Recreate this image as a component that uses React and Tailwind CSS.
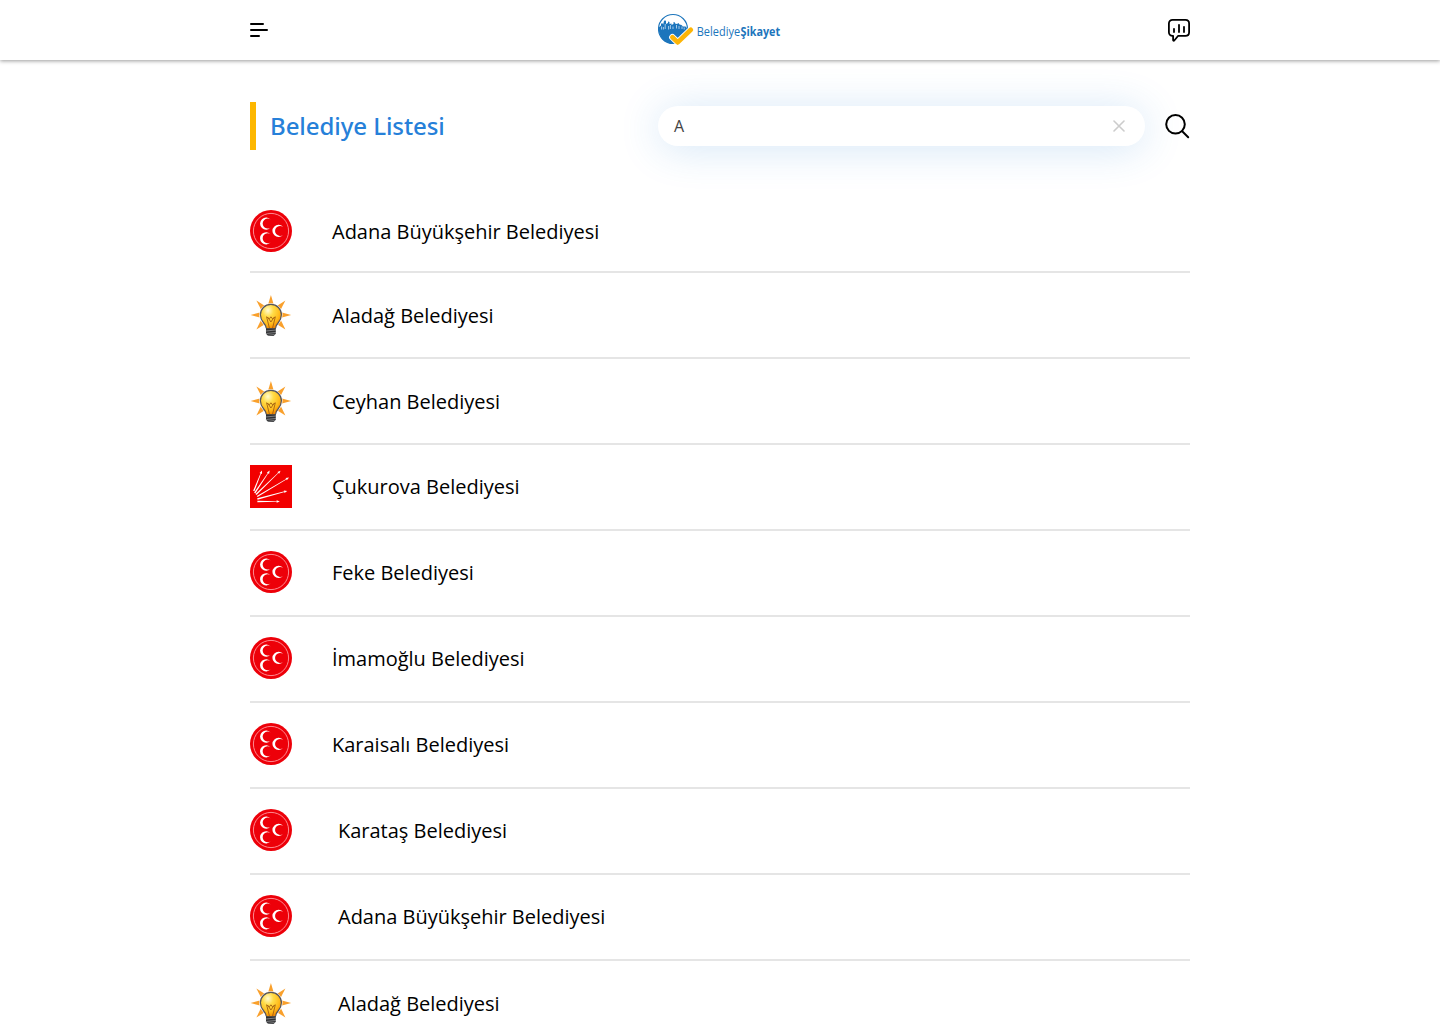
import React from "react";

const rows = [
  { name: "Adana Büyükşehir Belediyesi", party: "crescents", pad: "pt-[23px]", text: "ml-10 mt-px" },
  { name: "Aladağ Belediyesi", party: "bulb", pad: "pt-[22px]", text: "ml-10" },
  { name: "Ceyhan Belediyesi", party: "bulb", pad: "pt-[22px]", text: "ml-10" },
  { name: "Çukurova Belediyesi", party: "arrows", pad: "pt-5", text: "ml-10 mt-px" },
  { name: "Feke Belediyesi", party: "crescents", pad: "pt-5", text: "ml-10 mt-px" },
  { name: "İmamoğlu Belediyesi", party: "crescents", pad: "pt-5", text: "ml-10 mt-px" },
  { name: "Karaisalı Belediyesi", party: "crescents", pad: "pt-5", text: "ml-10 mt-px" },
  { name: "Karataş Belediyesi", party: "crescents", pad: "pt-5", text: "ml-[46px] mt-px" },
  { name: "Adana Büyükşehir Belediyesi", party: "crescents", pad: "pt-5", text: "ml-[46px] mt-px" },
  { name: "Aladağ Belediyesi", party: "bulb", pad: "pt-[22px]", text: "ml-[46px]" },
];

function Crescents() {
  const moon = "M5-3.8A6.1 6.1 0 1 0 5 3.8A5 5 0 1 1 5-3.8Z";
  return (
    <svg className="h-[42px] w-[42px] shrink-0" viewBox="0 0 42 42">
      <circle cx="21" cy="21" r="21" fill="#ed0009" />
      <circle cx="21" cy="21" r="17.6" fill="none" stroke="#ff9aa0" strokeWidth="0.9" />
      <g fill="#fff">
        <path d={moon} transform="translate(15.9 13.6)" />
        <path d={moon} transform="translate(15.9 28.3)" />
        <path d={moon} transform="translate(28.3 20.9)" />
      </g>
    </svg>
  );
}

const glassPath =
  "M20.9 9.4c-6.1 0-10.5 4.7-10.5 10.4 0 3.4 1.5 6.1 3.3 8.2 1.4 1.6 2.1 2.9 2.3 4.4.2 1 .7 1.4 1.6 1.4h6.6c.9 0 1.4-.4 1.6-1.4.2-1.5.9-2.8 2.3-4.4 1.8-2.1 3.3-4.8 3.3-8.2 0-5.7-4.4-10.4-10.5-10.4z";

function Bulb() {
  return (
    <svg className="h-[42px] w-[42px] shrink-0" viewBox="0 0 42 42">
      <defs>
        <radialGradient id="glass" cx="0.36" cy="0.25" r="0.75">
          <stop offset="0" stopColor="#fffbd0" />
          <stop offset="0.35" stopColor="#ffdc48" />
          <stop offset="0.75" stopColor="#ffba1a" />
          <stop offset="1" stopColor="#f58a00" />
        </radialGradient>
      </defs>
      <g fill="#f9a02c">
        <path d="M20.9 0l2.8 9.4h-5.6z" />
        <path d="M6.4 5.4l9 5.8-4 4z" />
        <path d="M35.4 5.4l-9 5.8 4 4z" />
        <path d="M.6 20l9.2-2.4v5z" />
        <path d="M41.2 20l-9.2-2.4v5z" />
        <path d="M6.4 34.4l4.6-9.4 3.8 4.2z" />
        <path d="M35.4 34.4l-4.6-9.4-3.8 4.2z" />
      </g>
      <path d={glassPath} fill="#fff" stroke="#fff" strokeWidth="2.2" />
      <path d={glassPath} fill="url(#glass)" stroke="#55555c" strokeWidth="1.2" />
      <path d="M19.4 33l-2.8-11.2 2.8 2 1.5-2 1.6 2 2.8-2L22.6 33M18 22.6l2.9 4.4 3-4.4" fill="none" stroke="#a35f10" strokeWidth="0.9" />
      <path d="M16 33.4h9.8v5.4l-2.2 2.2h-5.2L16 38.8z" fill="#2f3032" />
      <path d="M15.8 36l10.2-1M15.8 38.5l10.2-1M17.6 40.4l7-.8" stroke="#a4a5a7" strokeWidth="0.7" />
    </svg>
  );
}

const rays = [
  [3.8, 26, 11.7, 6.3],
  [4.7, 28, 19.3, 6.2],
  [6, 29.6, 30, 6.2],
  [7.2, 31.5, 38.3, 13],
  [7.4, 34, 36.5, 26.1],
  [7.4, 36.5, 29, 36.5],
];

function Arrows() {
  return (
    <svg className="h-[43px] w-[42px] shrink-0" viewBox="0 0 42 43">
      <path fill="#f20000" d="M0 0h42v43H0z" />
      {rays.map(([x1, y1, x2, y2]) => {
        const angle = (Math.atan2(y2 - y1, x2 - x1) * 180) / Math.PI;
        const length = Math.hypot(x2 - x1, y2 - y1);
        return (
          <g key={x2} transform={`translate(${x1} ${y1}) rotate(${angle})`} fill="#fff">
            <path d={`M0-.7L${length - 2}-.3v.6L0 .7z`} />
            <path d={`M${length - 2.4}-1.3L${length + 0.8} 0L${length - 2.4} 1.3z`} />
          </g>
        );
      })}
    </svg>
  );
}

const icons = { crescents: Crescents, bulb: Bulb, arrows: Arrows };

function Logo() {
  return (
    <div className="ml-[390px] mt-3 flex h-9 w-[130px] items-start text-[#1c75bc]">
      <svg className="h-9 w-[38px] shrink-0" viewBox="0 0 38 36">
        <circle cx="15" cy="17" r="14.5" fill="#fff" stroke="#1c75bc" strokeWidth="1.1" />
        <path d="M.6 15.5L3 13.5v-2h2v1.5l1-4 1-.8 1 .8v3l2-1V9.5l1.5.5v2l2-.5v1.5l2-1v-2l1.5.5v1l2 .5 1.5-1 1 1.5 2 .5 1.5 1.5h2.5l1.4 1.5C29.6 26 24 31.5 15 31.5S.4 25 .6 15.5z" fill="#1c75bc" />
        <path d="M3.6 14.5v3M5.4 15v2.5M7.2 12v5M10.6 14v3.5M12.4 13v4M15 14.5v2.5M18.5 13v3.5M21 14v3M24 14.5v2.5M26.2 15.5v2" stroke="#b5d5ee" strokeWidth="0.9" />
        <path d="M14.4 25.2l5.3 5.2L32 18.5" fill="none" stroke="#fff" strokeWidth="6.5" strokeLinecap="round" strokeLinejoin="round" />
        <path d="M14.4 25.2l5.3 5.2L32.8 17.8" fill="none" stroke="#fdb507" strokeWidth="4.7" strokeLinecap="round" strokeLinejoin="round" />
      </svg>
      <svg className="h-9 w-[92px] shrink-0 overflow-visible" viewBox="38 0 92 36" fill="currentColor" fontFamily="'Open Sans', sans-serif">
        <text x="38.7" y="24" fontSize="12.2" textLength="43.4" lengthAdjust="spacingAndGlyphs">Belediye</text>
        <text x="82.5" y="24" fontSize="12" fontWeight="700" textLength="39.7" lengthAdjust="spacingAndGlyphs">Şikayet</text>
      </svg>
    </div>
  );
}

export default function App() {
  return (
    <div className="h-[1024px] overflow-hidden bg-white font-['Open_Sans',sans-serif] text-black">
      <header className="h-[60px] bg-white shadow-[0_1px_4px_rgba(0,0,0,0.4)]">
        <div className="mx-auto flex h-full w-[940px] items-start">
          <button aria-label="Menü" className="mt-[23px]">
            <svg className="h-[14px] w-[18px]" viewBox="0 0 18 14" stroke="#000" strokeWidth="2" strokeLinecap="round">
              <path d="M1 1h12M1 7h16M1 13h8" />
            </svg>
          </button>
          <Logo />
          <button aria-label="Şikayetler" className="ml-auto mt-[18px]">
            <svg className="h-6 w-[22px]" viewBox="0 0 22 24" fill="none" stroke="#000" strokeWidth="1.8" strokeLinecap="round" strokeLinejoin="round">
              <path d="M4.6 1.9h12.8c2.2 0 3.7 1.4 3.7 3.6v8.7c0 2.2-1.5 3.6-3.7 3.6h-7.2l-3.9 4.7c-.5.6-1.2.3-1.2-.5v-4.2h-.5C2.4 17.8.9 16.4.9 14.2V5.5c0-2.2 1.5-3.6 3.7-3.6z" />
              <path d="M6 10.8v3.2M11 6.8V14M16 8.8V14" />
            </svg>
          </button>
        </div>
      </header>

      <main className="mx-auto w-[940px]">
        <div className="flex h-[127px] items-start pt-[42px]">
          <h1 className="flex h-12 w-[408px] items-center border-l-[6px] border-[#fdb700] pl-[14px] font-['Noto_Sans',sans-serif] text-2xl font-medium tracking-[-0.07px] text-[#2680d9]">
            Belediye Listesi
          </h1>
          <div className="mt-1 flex h-10 w-[487px] items-center justify-between rounded-full bg-white pl-4 pr-5 shadow-[0_3px_42px_rgba(38,128,217,0.2)]">
            <span className="text-base text-[#444]">A</span>
            <svg className="h-3 w-3" viewBox="0 0 12 12" stroke="#ccc" strokeWidth="1.6" strokeLinecap="round">
              <path d="M1 1l10 10M11 1L1 11" />
            </svg>
          </div>
          <button aria-label="Ara" className="ml-5 mt-3">
            <svg className="h-[25px] w-[25px]" viewBox="0 0 25 25" fill="none" stroke="#000" strokeWidth="2" strokeLinecap="round">
              <circle cx="10.5" cy="10.3" r="9.3" />
              <path d="M17.2 17.2l6 6" />
            </svg>
          </button>
        </div>

        <ul>
          {rows.map((row, i) => {
            const Icon = icons[row.party];
            return (
              <li key={i} className={`flex h-[86px] items-start border-b-2 border-[#e5e5e5] ${row.pad}`}>
                <Icon />
                <span className={`text-xl leading-[42px] tracking-[-0.01px] ${row.text}`}>{row.name}</span>
              </li>
            );
          })}
        </ul>
      </main>
    </div>
  );
}
